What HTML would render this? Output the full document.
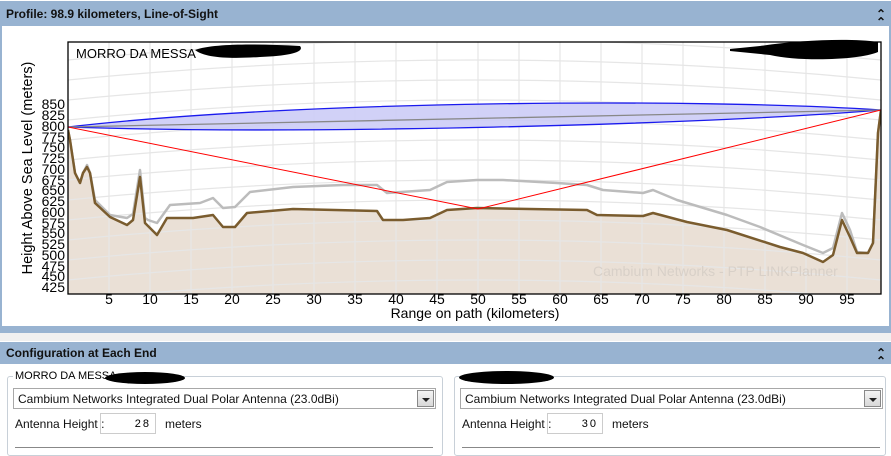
<!DOCTYPE html>
<html><head><meta charset="utf-8"><style>
*{margin:0;padding:0;box-sizing:border-box}
body{width:891px;height:449px;overflow:hidden;background:#fff;font-family:"Liberation Sans",sans-serif;position:relative}
.bar{position:absolute;left:0;width:891px;background:#98b3d1;font-weight:bold;font-size:12px;color:#111;padding-left:6px}
.chev{position:absolute;right:5px;top:0;font-size:12px;font-weight:bold;line-height:8px}
.abs{position:absolute}
.sel{position:absolute;height:21px;border:1px solid #a8a8a8;background:#fff;font-size:12px;padding:3px 0 0 4px;color:#111}
.sel .btn{position:absolute;right:1px;top:1px;width:17px;height:17px;border:1px solid #888;background:linear-gradient(#f4f4f4,#d8d8d8)}
.sel .btn:after{content:"";position:absolute;left:4px;top:7px;border-left:4px solid transparent;border-right:4px solid transparent;border-top:4px solid #222}
.inp{position:absolute;height:21px;width:56px;border:1px solid #ccc;font-size:11px;text-align:right;padding:4px 4px 0 0;letter-spacing:2px}
.lbl{position:absolute;font-size:12px;color:#111}
.group{position:absolute;border:1px solid #c8d0d8;border-radius:3px}
.blob{position:absolute;background:#000;border-radius:50%}
</style></head><body>
<div class="bar" style="top:1px;height:25px;line-height:26px">Profile: 98.9 kilometers, Line-of-Sight<span class="chev" style="top:9px">⌃<br>⌃</span></div>
<div class="abs" style="left:0;top:26px;width:2px;height:306px;background:#98b3d1"></div>
<div class="abs" style="right:0;top:26px;width:2px;height:306px;background:#98b3d1"></div>
<div class="abs" style="left:0;top:326px;width:891px;height:7px;background:#98b3d1"></div>
<div class="abs" style="left:0;top:333px;width:891px;height:8px;background:#f0f0f0"></div>
<svg class="abs" style="left:0;top:0" width="891" height="330" xmlns="http://www.w3.org/2000/svg" font-family="Liberation Sans, sans-serif">
<defs><clipPath id="c"><rect x="68" y="42" width="813" height="252"/></clipPath></defs>
<g clip-path="url(#c)">
<path d="M68,130 L70,140 75,173 80,183 83,173 87,167 90,173 95,203 110,217 127,225 133,220 140,177 145,223 157,235 167,218 193,218 213,215 223,227 235,227 247,213 293,209 377,211 383,220 403,220 430,218 447,210 477,208 587,210 597,215 643,216 653,213 687,222 727,230 780,247 803,253 823,262 833,255 842,220 850,237 857,253 868,253 873,243 878,133 881,110 L881,294 L68,294Z" fill="#eae0d6"/>
<g stroke="#e6e6e6" stroke-width="1.2" fill="none">
<path d="M68,60 Q475,20 881,60"/><path d="M68,80 Q475,40 881,80"/><path d="M68,100 Q475,60 881,100"/><path d="M68,120 Q475,80 881,120"/><path d="M68,140 Q475,100 881,140"/><path d="M68,160 Q475,120 881,160"/><path d="M68,180 Q475,140 881,180"/><path d="M68,200 Q475,160 881,200"/><path d="M68,220 Q475,180 881,220"/><path d="M68,240 Q475,200 881,240"/><path d="M68,260 Q475,220 881,260"/><path d="M68,280 Q475,240 881,280"/><path d="M68,300 Q475,260 881,300"/>
<path d="M109,42V294M150,42V294M191,42V294M232,42V294M273,42V294M314,42V294M355,42V294M396,42V294M437,42V294M478,42V294M519,42V294M560,42V294M601,42V294M642,42V294M683,42V294M724,42V294M765,42V294M806,42V294M847,42V294"/>
</g>
<path d="M68,130 L70,140 75,173 80,183 83,173 87,165 90,173 95,200 110,215 127,218 133,214 140,170 145,218 148,220 157,223 170,205 200,203 213,198 223,208 235,207 250,192 293,187 343,185 377,185 387,193 430,190 447,182 477,180 503,180 557,183 587,185 603,190 643,193 653,190 677,200 727,215 760,227 803,245 823,253 833,248 842,213 850,230 857,252 868,253 873,243 878,133 881,110" fill="none" stroke="#bcbcbc" stroke-width="2.5" stroke-linejoin="round"/>
<path d="M68,130 L70,140 75,173 80,183 83,173 87,167 90,173 95,203 110,217 127,225 133,220 140,177 145,223 157,235 167,218 193,218 213,215 223,227 235,227 247,213 293,209 377,211 383,220 403,220 430,218 447,210 477,208 587,210 597,215 643,216 653,213 687,222 727,230 780,247 803,253 823,262 833,255 842,220 850,237 857,253 868,253 873,243 878,133 881,110" fill="none" stroke="#7a5c2e" stroke-width="2.5" stroke-linejoin="round"/>
<path d="M68,127 C300,100 700,98 881,110 C700,125 300,135 68,127Z" fill="#c9c9f6" fill-opacity="0.85" stroke="#1a1aee" stroke-width="1.3"/>
<path d="M68,127 L881,110" stroke="#888" stroke-width="1.3"/>
<path d="M68,127 L478,209 L881,110" fill="none" stroke="#f00" stroke-width="1"/>
<text x="593" y="276" font-size="14" fill="#d8d0c8">Cambium Networks - PTP LINKPlanner</text>
</g>
<rect x="68" y="42" width="813" height="252" fill="none" stroke="#000" stroke-width="1.3"/>
<text x="76" y="58" font-size="13">MORRO DA MESSA</text>
<path d="M195,50 C215,43 260,44 300,46 C305,52 290,56 260,57 C230,59 205,58 195,50Z" fill="#000"/>
<path d="M730,49 L760,46 C800,40 850,38 878,42 L878,52 C860,60 800,62 770,55 L730,51Z" fill="#000"/>
<g font-size="14" text-anchor="end">
<text x="65" y="109">850</text><text x="65" y="120">825</text><text x="65" y="131">800</text><text x="65" y="142">775</text><text x="65" y="152">750</text><text x="65" y="163">725</text><text x="65" y="174">700</text><text x="65" y="185">675</text><text x="65" y="195">650</text><text x="65" y="206">625</text><text x="65" y="217">600</text><text x="65" y="228">575</text><text x="65" y="238">550</text><text x="65" y="249">525</text><text x="65" y="260">500</text><text x="65" y="271">475</text><text x="65" y="281">450</text><text x="65" y="292">425</text>
</g>
<g font-size="14" text-anchor="middle">
<text x="109" y="304">5</text><text x="150" y="304">10</text><text x="191" y="304">15</text><text x="232" y="304">20</text><text x="273" y="304">25</text><text x="314" y="304">30</text><text x="355" y="304">35</text><text x="396" y="304">40</text><text x="437" y="304">45</text><text x="478" y="304">50</text><text x="519" y="304">55</text><text x="560" y="304">60</text><text x="601" y="304">65</text><text x="642" y="304">70</text><text x="683" y="304">75</text><text x="724" y="304">80</text><text x="765" y="304">85</text><text x="806" y="304">90</text><text x="847" y="304">95</text>
</g>
<text x="475" y="318" font-size="14" text-anchor="middle">Range on path (kilometers)</text>
<text transform="translate(32,168) rotate(-90)" font-size="14.5" text-anchor="middle">Height Above Sea Level (meters)</text>
</svg>
<div class="bar" style="top:342px;height:22px;line-height:23px">Configuration at Each End<span class="chev" style="top:7px">⌃<br>⌃</span></div>
<div class="group" style="left:7px;top:376px;width:436px;height:80px"></div>
<div class="abs" style="left:13px;top:370px;font-size:11px;background:#fff;padding:0 2px">MORRO DA MESSA</div>
<div class="blob" style="left:105px;top:372px;width:80px;height:12px"></div>
<div class="sel" style="left:13px;top:388px;width:423px">Cambium Networks Integrated Dual Polar Antenna (23.0dBi)<div class="btn"></div></div>
<div class="lbl" style="left:15px;top:417px">Antenna Height :</div>
<div class="inp" style="left:100px;top:413px">28</div>
<div class="lbl" style="left:165px;top:417px">meters</div>
<div class="abs" style="left:15px;top:447px;width:418px;height:1px;background:#888"></div>
<div class="group" style="left:454px;top:376px;width:432px;height:80px"></div>
<div class="blob" style="left:459px;top:371px;width:95px;height:13px"></div>
<div class="sel" style="left:460px;top:388px;width:423px">Cambium Networks Integrated Dual Polar Antenna (23.0dBi)<div class="btn"></div></div>
<div class="lbl" style="left:462px;top:417px">Antenna Height :</div>
<div class="inp" style="left:547px;top:413px">30</div>
<div class="lbl" style="left:612px;top:417px">meters</div>
<div class="abs" style="left:462px;top:447px;width:418px;height:1px;background:#888"></div>
</body></html>
